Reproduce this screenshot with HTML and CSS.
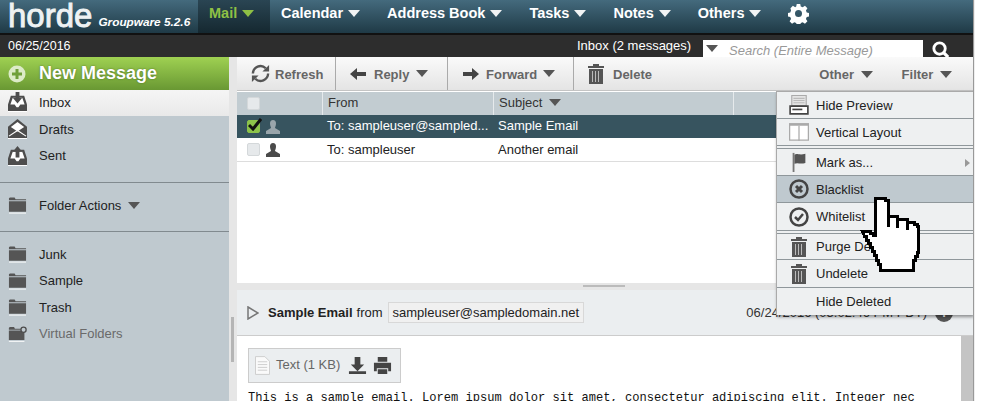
FILE: index.html
```html
<!DOCTYPE html>
<html lang="en">
<head>
<meta charset="utf-8">
<title>Horde Mail</title>
<link rel="stylesheet" href="styles.css">
</head>
<body>
<svg class="defs" width="0" height="0">
  <symbol id="folder" viewBox="0 0 20 18"><path d="M1 2l1-1h5l1 2h11v1H1zM1 5h18v11H1z" fill="#555"/><path d="M1 17h18v1H1z" fill="#fff"/></symbol>
  <symbol id="trash" viewBox="0 0 18 22"><path d="M6 1h6v2h5v2H1V3h5zM2 6h14v15H2z" fill="#555"/><path d="M5 8h1v11H5zM8 8h1v11H8zM11 8h1v11h-1z" fill="#bbb"/></symbol>
  <symbol id="arrowtray" viewBox="0 0 20 21"><path d="M3 4h14l3 9v7H0v-7z" fill="#4d4d4d"/><path d="M5 6h10l2.500 7H13l-2 3H9l-2-3H2.500z" fill="#fff"/><path d="M8 0h4v6h3l-5 6-5-6h3z" fill="#4d4d4d"/><path d="M0 20h20v1H0z" fill="#fff"/></symbol>
  <symbol id="sent" viewBox="0 0 20 21"><path d="M3 4h14l3 9v7H0v-7z" fill="#4d4d4d"/><path d="M5 6h10l2.500 7H13l-2 3H9l-2-3H2.500z" fill="#fff"/><path d="M10 0l5 6h-3v6H8V6H5z" fill="#4d4d4d"/><path d="M0 20h20v1H0z" fill="#fff"/></symbol>
  <symbol id="draft" viewBox="0 0 20 21"><path d="M10 0l10 8v12H0V8z" fill="#4d4d4d"/><path d="M10 3l7 5.500-7 4.500-7-4.500z" fill="#fff"/><path d="M1 18l9-6 9 6" fill="none" stroke="#fff" stroke-width="1.200"/><path d="M0 20h20v1H0z" fill="#fff"/></symbol>
  <symbol id="user" viewBox="0 0 16 14"><path d="M8 0c2 0 3 1.500 3 3.500S10 7 10 8l5 3v3H1v-3l5-3c0-1-1-2.500-1-4.500S6 0 8 0z" fill="currentColor"/></symbol>
  <symbol id="caret" viewBox="0 0 12 7"><path d="M0 0h12L6 7z" fill="currentColor"/></symbol>
</svg>
<div class="app">
  <header class="nav">
    <div class="brand"><span class="logo">horde</span><span class="version">Groupware 5.2.6</span></div>
    <nav class="tabs">
      <a class="tab tab-active">Mail <svg class="caret-lg"><use href="#caret"/></svg></a>
      <a class="tab tab-first">Calendar <svg class="caret-lg"><use href="#caret"/></svg></a>
      <a class="tab">Address Book <svg class="caret-lg"><use href="#caret"/></svg></a>
      <a class="tab">Tasks <svg class="caret-lg"><use href="#caret"/></svg></a>
      <a class="tab">Notes <svg class="caret-lg"><use href="#caret"/></svg></a>
      <a class="tab">Others <svg class="caret-lg"><use href="#caret"/></svg></a>
      <a class="tab tab-gear"><svg class="gear" viewBox="0 0 24 24"><path fill="#fff" fill-rule="evenodd" d="M10 1h4l.6 3 2.200.9 2.600-1.700 2.800 2.800-1.700 2.600.9 2.200 3 .6v4l-3 .6-.9 2.200 1.700 2.600-2.800 2.800-2.600-1.700-2.200.9-.6 3h-4l-.6-3-2.200-.9-2.600 1.700-2.800-2.800 1.700-2.600-.9-2.200-3-.6v-4l3-.6.9-2.200L2.800 6 5.600 3.200l2.600 1.700 1.200-.9zM12 8a4 4 0 100 8 4 4 0 000-8z"/></svg></a>
    </nav>
  </header>
  <div class="subbar">
    <span class="date">06/25/2016</span>
    <span class="count">Inbox (2 messages)</span>
    <div class="search"><svg class="caret-sm search-caret"><use href="#caret"/></svg><span class="search-text">Search (Entire Message)</span></div>
    <svg class="mag" viewBox="0 0 20 20"><circle cx="9" cy="9" r="6" fill="none" stroke="#fff" stroke-width="3"/><path d="M13 13l5 5" stroke="#fff" stroke-width="3.500"/></svg>
  </div>
  <div class="body">
    <aside class="side">
      <div class="new"><svg class="plus" viewBox="0 0 18 18"><circle cx="9" cy="9" r="8.500" fill="#dcebc8"/><path d="M7.500 4h3v3.500H14v3h-3.500V14h-3v-3.500H4v-3h3.500z" fill="#6f9f3a"/></svg><span>New Message</span></div>
      <div class="folder folder-on"><svg class="ficon"><use href="#arrowtray"/></svg>Inbox</div>
      <div class="folder"><svg class="ficon"><use href="#draft"/></svg>Drafts</div>
      <div class="folder"><svg class="ficon"><use href="#sent"/></svg>Sent</div>
      <div class="rule"></div>
      <div class="folder folder-act"><svg class="ficon"><use href="#folder"/></svg>Folder Actions <svg class="caret-sm act-caret"><use href="#caret"/></svg></div>
      <div class="rule"></div>
      <div class="folder folder-first"><svg class="ficon"><use href="#folder"/></svg>Junk</div>
      <div class="folder"><svg class="ficon"><use href="#folder"/></svg>Sample</div>
      <div class="folder"><svg class="ficon"><use href="#folder"/></svg>Trash</div>
      <div class="folder folder-dim"><svg class="ficon" viewBox="0 0 22 18"><path d="M1 2l1-1h5l1 2h7v1H1zM1 5h18v11H1z" fill="#555"/><path d="M1 17h18v1H1z" fill="#fff"/><circle cx="18" cy="4" r="3" fill="#bfc9cf" stroke="#4d4d4d" stroke-width="1.500"/></svg>Virtual Folders</div>
    </aside>
    <div class="gutter"><div class="grip"></div></div>
    <main class="main">
      <div class="toolbar">
        <div class="tb tb-refresh"><svg class="tb-ic" viewBox="0 0 22 22"><path d="M3 11a8 8 0 0113.500-5.500" fill="none" stroke="#555" stroke-width="2.500"/><path d="M19 11a8 8 0 01-13.500 5.500" fill="none" stroke="#555" stroke-width="2.500"/><path d="M20 2v7h-7zM2 20v-7h7z" fill="#555"/></svg><span class="tb-label">Refresh</span></div>
        <div class="tb tb-reply"><svg class="tb-arrow" viewBox="0 0 16 12"><path d="M7 0v4h9v4H7v4L0 6z" fill="#444"/></svg><span class="tb-label">Reply</span><svg class="caret-sm tb-caret"><use href="#caret"/></svg></div>
        <div class="tb tb-forward"><svg class="tb-arrow" viewBox="0 0 16 12"><path d="M9 0v4H0v4h9v4l7-6z" fill="#444"/></svg><span class="tb-label">Forward</span><svg class="caret-sm tb-caret"><use href="#caret"/></svg></div>
        <div class="tb tb-delete"><svg class="tb-trash"><use href="#trash"/></svg><span class="tb-label">Delete</span></div>
        <div class="tb-right"><span class="tb-plain"><span class="tb-label">Other</span> <svg class="caret-sm tb-caret"><use href="#caret"/></svg></span><span class="tb-plain"><span class="tb-label">Filter</span> <svg class="caret-sm tb-caret"><use href="#caret"/></svg></span></div>
      </div>
      <div class="list">
        <div class="row row-head">
          <div class="c-check"><span class="box"></span></div>
          <div class="c-from sep">From</div>
          <div class="c-subj sep">Subject <svg class="caret-sm subj-caret"><use href="#caret"/></svg></div>
          <div class="c-rest sep"></div>
        </div>
        <div class="row row-sel">
          <div class="c-check"><span class="box box-on"><svg viewBox="0 0 14 13"><path d="M1 7l4 4 8-10" fill="none" stroke="#111" stroke-width="3"/></svg></span><svg class="user user-sel"><use href="#user"/></svg></div>
          <div class="c-from">To: sampleuser@sampled...</div>
          <div class="c-subj">Sample Email</div>
        </div>
        <div class="row row-plain">
          <div class="c-check"><span class="box"></span><svg class="user"><use href="#user"/></svg></div>
          <div class="c-from">To: sampleuser</div>
          <div class="c-subj">Another email</div>
        </div>
      </div>
      <div class="resizer"><div class="resizer-grip"></div></div>
      <section class="preview">
        <div class="phead">
          <svg class="expand" viewBox="0 0 12 14"><path d="M1 1l10 6-10 6z" fill="none" stroke="#777" stroke-width="1.500"/></svg>
          <strong>Sample Email</strong><span class="from">from</span><span class="addr">sampleuser@sampledomain.net</span>
          <span class="pdate">06/24/2016 (05:02:46 PM PDT)</span>
          <span class="info">i</span>
        </div>
        <div class="pcontent">
          <div class="pbody">
            <div class="attach">
              <svg class="doc" viewBox="0 0 16 20"><path d="M.5.500h10l5 5v14H.5z" fill="#fafafa" stroke="#ccc"/><path d="M3 6h10M3 9h10M3 12h10M3 15h10" stroke="#ccc"/></svg>
              <span class="attach-text">Text (1 KB)</span>
              <svg class="att-ic att-down" viewBox="0 0 20 20"><path d="M7 1h6v8h4l-7 7-7-7h4zM1 16h18v3H1z" fill="#444"/></svg>
              <svg class="att-ic" viewBox="0 0 20 20"><path d="M5 1h10v5H5zM1 7h18v9h-3v-3H4v3H1zM5 14h10v5H5z" fill="#444"/></svg>
            </div>
            <pre class="mail">This is a sample email. Lorem ipsum dolor sit amet, consectetur adipiscing elit. Integer nec</pre>
          </div>
          <div class="scroll"></div>
        </div>
      </section>
    </main>
  </div>

  <div class="menu">
    <div class="mi"><svg class="mi-ic" viewBox="0 0 18 18"><path d="M2.500.500h13v9h-13z" fill="#e4e4e4" stroke="#aaa"/><path d="M4 3h10M4 5h10M4 7h10" stroke="#bbb"/><path d="M1 10h16v7H1z" fill="#fff" stroke="#444" stroke-width="1.500"/><path d="M3 13h9" stroke="#444" stroke-width="1.500"/></svg>Hide Preview</div>
    <div class="mi mi-gap"><svg class="mi-ic" viewBox="0 0 16 14"><path d="M.5.500h15v13H.5z" fill="#fff" stroke="#aaa"/><path d="M0 0h16v2H0z" fill="#aaa"/><path d="M8 2v12" stroke="#aaa"/></svg>Vertical Layout</div>
    <div class="mi"><svg class="mi-ic" viewBox="0 0 16 22"><path d="M1 1h2v21H1z" fill="#777"/><path d="M3 3c3-2 5 1 12-1v10c-6 2-8-1-12 1z" fill="#555"/></svg>Mark as...<svg class="sub-arrow" viewBox="0 0 5 8"><path d="M0 0l5 4-5 4z" fill="#999"/></svg></div>
    <div class="mi mi-hover"><svg class="mi-ic" viewBox="0 0 20 20"><circle cx="10" cy="10" r="8.500" fill="none" stroke="#444" stroke-width="2.500"/><path d="M7 7l6 6M13 7l-6 6" stroke="#444" stroke-width="3"/></svg>Blacklist</div>
    <div class="mi mi-gap mi-gap-lg"><svg class="mi-ic" viewBox="0 0 20 20"><circle cx="10" cy="10" r="8.500" fill="none" stroke="#444" stroke-width="2.500"/><path d="M6 10l3 3 5-6" fill="none" stroke="#444" stroke-width="2.500"/></svg>Whitelist</div>
    <div class="mi mi-short"><svg class="mi-ic mi-tall"><use href="#trash"/></svg>Purge Deleted</div>
    <div class="mi mi-long"><svg class="mi-ic mi-tall"><use href="#trash"/></svg>Undelete</div>
    <div class="mi mi-last"><span class="mi-ic"></span>Hide Deleted</div>
  </div>
  <svg class="hand" viewBox="0 0 60 78"><path shape-rendering="crispEdges" d="M15 3h10v2h3v16h9v3h10v3h7v2h3v2h1v26h-1v4h-2v4h-2v10H20v-6h-2v-4h-2v-5h-2v-4h-2v-4h-2v-4H8v-3H6v-4H4v-1l-2-4h8v2h3v2h2z" fill="#fff" stroke="#000" stroke-width="3"/><path shape-rendering="crispEdges" d="M28 21v11M37 24v9M47 27v8" stroke="#000" stroke-width="3" fill="none"/></svg>
</div>
</body>
</html>
```
FILE: styles.css
```css
* { box-sizing: border-box; }
html, body { margin: 0; padding: 0; background: #fff; height: 100%; overflow: hidden; }
body { font-family: "Liberation Sans", Arial, sans-serif; font-size: 13px; color: #222; }
.defs { position: absolute; }
.app { position: relative; width: 973px; height: 401px; overflow: hidden; display: flex; flex-direction: column; box-shadow: 1px 0 1px #999; }

.nav { height: 35px; flex: none; display: flex; background: linear-gradient(#446a7d, #1f3a46); border-bottom: 2px solid #111; }
.brand { width: 198px; display: flex; align-items: flex-end; padding-left: 8px; color: #fff; }
.logo { font-size: 33px; line-height: 31px; margin-bottom: 2px; color: #eef2f3; -webkit-text-stroke: .9px #eef2f3; }
.version { font-size: 11.800px; font-weight: bold; font-style: italic; margin: 0 0 4px 6px; white-space: nowrap; }
.tabs { display: flex; align-items: stretch; flex: 1; }
.tab { display: flex; align-items: center; gap: 5px; padding: 0 13.500px 7px; font-size: 14.500px; font-weight: bold; color: #fff; white-space: nowrap; }
.tab-active { width: 72px; padding-left: 11px; color: #8fc045; background: linear-gradient(#2a4553, #152830); }
.tab-active .caret-lg { color: #8fc045; }
.tab-first { padding-left: 11px; }
.caret-lg { width: 12px; height: 7px; color: #f2f4f5; }
.caret-sm { width: 12px; height: 7px; color: #555; }
.gear { width: 21px; height: 21px; }
.tab-gear { padding-left: 13px; }

.subbar { height: 22px; flex: none; background: #2d2d2d; display: flex; align-items: center; color: #fff; font-size: 12.500px; position: relative; padding-left: 8px; }
.date { width: 569px; margin-bottom: 1px; }
.count { width: 126px; margin-bottom: 1px; font-size: 13px; white-space: nowrap; }
.search { width: 220px; height: 17px; margin-top: 5px; background: #fff; display: flex; align-items: center; }
.search-caret { margin-left: 3px; color: #555; }
.search-text { margin-left: 11px; font-style: italic; color: #999; font-size: 13px; margin-top: 3px; }
.mag { width: 19px; height: 19px; margin: 7px 0 0 8px; }

.body { flex: 1; display: flex; min-height: 0; }
.side { width: 229px; flex: none; background: #bfc9cf; display: flex; flex-direction: column; }
.new { height: 33px; flex: none; display: flex; align-items: center; padding-left: 8px; gap: 13px; background: linear-gradient(#9fd152, #699833); color: #fff; font-size: 18px; font-weight: bold; text-shadow: 0 0 2px #4d6d24; }
.plus { width: 18px; height: 18px; }
.folder { height: 26.500px; flex: none; display: flex; align-items: center; padding-left: 8px; color: #222; }
.ficon { width: 19px; height: 20px; margin-right: 12px; flex: none; }
.folder-on { background: linear-gradient(#f5f5f5, #e9e9e9); height: 26px; padding-bottom: 2px; }
.folder-act { height: 47.500px; padding-bottom: 3px; }
.act-caret { margin-left: 7px; }
.folder-first { margin-top: 9.500px; }
.folder-dim { color: #6a6a6a; }
.rule { height: 1px; background: #818a8f; flex: none; margin-top: 13px; }
.rule + .folder-act + .rule { margin-top: 0; }

.gutter { width: 8px; flex: none; background: #e6e6e6; position: relative; }
.grip { position: absolute; left: 2px; top: 260px; width: 3px; height: 45px; background: #b5b5b5; }

.main { flex: 1; min-width: 0; display: flex; flex-direction: column; background: #fff; }
.toolbar { height: 34px; flex: none; display: flex; align-items: center; background: linear-gradient(#fafafa, #e4e4e4); border-bottom: 1px solid #c4c4c4; color: #666; font-weight: bold; font-size: 13px; }
.tb { height: 33px; display: flex; align-items: center; border-right: 1px solid #aaa; white-space: nowrap; flex: none; }
.tb-label { position: relative; top: 1px; }
.tb-refresh { width: 99px; padding-left: 13px; gap: 4px; }
.tb-reply { width: 112px; padding-left: 14px; gap: 8px; }
.tb-forward { width: 126px; padding-left: 15px; gap: 7px; }
.tb-delete { border-right: 0; padding-left: 13px; gap: 8px; }
.tb-ic { width: 21px; height: 21px; }
.tb-arrow { width: 16px; height: 12px; }
.tb-trash { width: 18px; height: 22px; }
.tb-caret { margin-left: -1px; }
.tb-right .tb-caret { margin-left: 3px; }
.tb-right { margin-left: auto; display: flex; gap: 29px; padding-right: 21px; }
.tb-plain { white-space: nowrap; }

.list { flex: 1; min-height: 0; background: #fff; }
.row { display: flex; align-items: center; font-size: 13px; }
.row-head { height: 23px; background: #c2ccd1; margin-top: 1px; color: #333; }
.row-head .sep { height: 100%; border-left: 1px solid #e6eaec; display: flex; align-items: center; padding-bottom: 2px; }
.row-sel { height: 23px; background: #37545f; color: #fff; }
.row-sel .c-from, .row-sel .c-subj { margin-bottom: 2px; }
.row-plain { height: 24px; border-bottom: 1px solid #ddd; color: #222; }
.c-check { width: 85px; display: flex; align-items: center; padding-left: 10px; gap: 5px; flex: none; }
.c-from { width: 171px; flex: none; padding-left: 5px; white-space: nowrap; }
.c-subj { width: 240px; flex: none; padding-left: 5px; }
.c-rest { flex: 1; }
.subj-caret { margin-left: 7px; }
.box { width: 13px; height: 13px; border-radius: 2px; background: #e6e9eb; border: 1px solid #d4d8da; display: block; flex: none; }
.box-on { background: #8cc34a; border-color: #8cc34a; }
.box-on svg { display: block; width: 14px; height: 13px; margin: -3px 0 0 0; }
.user { width: 16px; height: 14px; color: #4a4a4a; flex: none; }
.user-sel { color: #99a5ab; }

.resizer { height: 7px; flex: none; background: #e6e6e6; position: relative; }
.resizer-grip { position: absolute; left: 346px; top: 2px; width: 42px; height: 2px; background: #bbb; }
.preview { height: 111px; flex: none; display: flex; flex-direction: column; }
.phead { height: 46px; flex: none; display: flex; align-items: center; padding-left: 10px; background: #ebeef0; border-bottom: 1px solid #ccc; font-size: 13px; color: #222; white-space: nowrap; }
.expand { width: 12px; height: 14px; margin-right: 9px; }
.from { margin-left: 4px; }
.addr { margin-left: 5px; padding: 2px 4px; background: #f0f0f0; border: 1px solid #d8d8d8; }
.pdate { margin-left: auto; color: #333; font-size: 13px; }
.info { width: 18px; height: 18px; border-radius: 50%; background: #555; color: #fff; font-weight: bold; font-size: 13px; text-align: center; line-height: 18px; margin: 0 20px 0 8px; }
.pcontent { flex: 1; display: flex; min-height: 0; overflow: hidden; }
.pbody { flex: 1; min-width: 0; padding: 12px 0 0 11px; }
.scroll { width: 12px; flex: none; background: #c4c4c4; }
.attach { width: 153px; height: 35px; display: flex; align-items: center; background: #ebeef0; border: 1px solid #ccc; padding-left: 6px; gap: 6px; }
.doc { width: 15px; height: 19px; flex: none; }
.attach-text { color: #666; font-size: 13px; white-space: nowrap; margin-bottom: 2px; }
.att-ic { width: 19px; height: 19px; flex: none; }
.att-down { margin-left: 2px; }
.mail { margin: 8px 0 0; font-family: "Liberation Mono", monospace; font-size: 12.080px; line-height: 14px; color: #111; white-space: pre; }

.menu { position: absolute; left: 776px; top: 91px; width: 197px; height: 224px; background: #eef0f1; border-top: 1px solid #aaa; border-left: 1px solid #aaa; box-shadow: 1px 2px 3px rgba(0,0,0,.4); display: flex; flex-direction: column; }
.mi { height: 27px; flex: none; display: flex; align-items: center; padding-left: 12px; border-bottom: 1px solid #8f979b; color: #222; font-size: 13px; position: relative; }
.mi-gap { height: 30px; border-bottom: 4px double #8f979b; }
.mi-gap-lg { height: 31px; }
.mi-short { height: 26px; }
.mi-long { height: 28px; }
.mi-hover { background: #bfc9cf; }
.mi-last { border-bottom: 0; }
.mi-ic { width: 20px; height: 20px; margin-right: 7px; flex: none; display: block; }
.mi-tall { height: 22px; }
.sub-arrow { position: absolute; right: 3px; top: 10px; width: 5px; height: 8px; }
.hand { position: absolute; left: 860px; top: 195px; width: 60px; height: 78px; }
```
